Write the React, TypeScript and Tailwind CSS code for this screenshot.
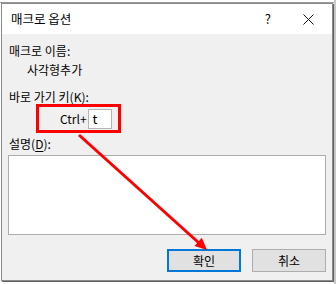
import React from "react";

const font = { fontFamily: '"Noto Sans CJK KR", "Noto Sans", sans-serif' };

export default function App() {
  return (
    <div className="relative w-[336px] h-[284px] bg-white overflow-hidden" style={font}>
      <div className="absolute top-[2px] left-0 w-[336px] h-px bg-[#9a9a9a]" />
      <div className="absolute top-0 left-[334px] w-[2px] h-[284px] bg-[#c8c8c8]" />

      {/* dialog */}
      <div className="relative ml-px mt-[3px] w-[332px] h-[278px] border border-[#8a8a8a] shadow-[1px_1px_0_#5f5f5f] flex flex-col bg-[#f0f0f0] text-[12px] text-black leading-4">
        {/* title bar */}
        <div className="h-[30px] shrink-0 bg-white flex items-center pl-[9px]">
          <span className="text-[12.5px]">매크로 옵션</span>
          <span className="ml-auto mr-[32px] text-[13px]">?</span>
          <svg width="11" height="11" viewBox="0 0 11 11" className="mr-[18px]">
            <path d="M0.5 0.5 L10.5 10.5 M10.5 0.5 L0.5 10.5" stroke="#111" strokeWidth="1" />
          </svg>
        </div>

        {/* body */}
        <div className="flex flex-col pl-[7px] pr-[6px]">
          <div className="mt-[9px] h-4">매크로 이름:</div>
          <div className="mt-[3px] h-4 pl-[18px]">사각형추가</div>
          <div className="mt-[11px] h-4">
            바로 가기 키(<span className="underline underline-offset-2">K</span>):
          </div>

          <div className="mt-[-1px] ml-[27px] w-[85px] h-[29px] border-[3px] border-[#ff0000] flex items-start">
            <span className="ml-[21px] mt-[4px] h-4">Ctrl+</span>
            <div className="ml-[1px] mt-[2px] w-[24px] h-[20px] bg-white border border-[#b4b4b4] pl-[4px] leading-[17px] text-[13px]">
              t
            </div>
          </div>

          <div className="mt-[3px] h-4">
            설명(<span className="underline underline-offset-2">D</span>):
          </div>

          <div className="mt-[3px] -ml-px w-[318px] h-[80px] bg-white border border-[#adadad]" />

          <div className="mt-[14px] flex gap-[11px] pl-[158px]">
            <button className="w-[74px] h-[23px] bg-[#e1e1e1] border-2 border-[#0078d7] text-[12px] leading-none">
              확인
            </button>
            <button className="w-[74px] h-[23px] bg-[#e1e1e1] border border-[#adadad] text-[12px] leading-none">
              취소
            </button>
          </div>
        </div>
      </div>

      {/* red arrow annotation */}
      <svg className="absolute inset-0 pointer-events-none" width="336" height="284" viewBox="0 0 336 284">
        <line x1="79" y1="135" x2="199" y2="243" stroke="#ff0000" strokeWidth="3" />
        <polygon points="207,250 194.5,246 201.8,237.8" fill="#ff0000" />
      </svg>
    </div>
  );
}
